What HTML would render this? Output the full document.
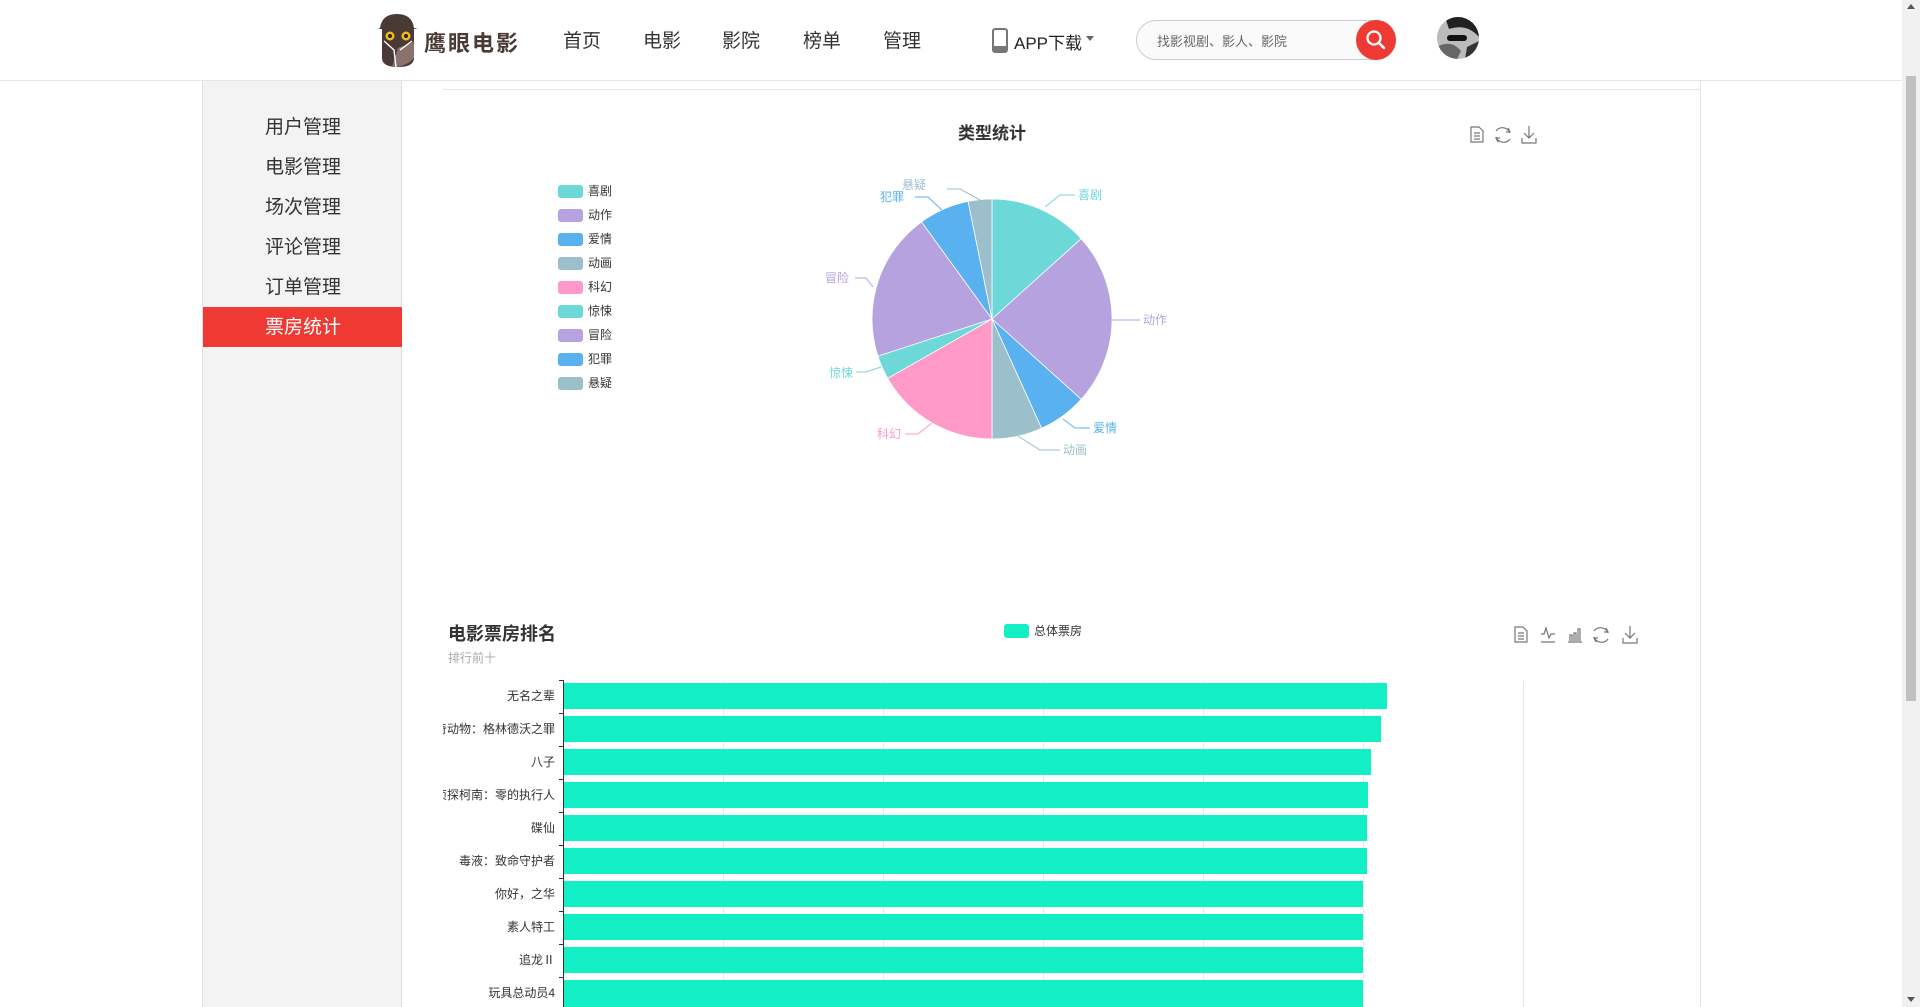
<!DOCTYPE html>
<html><head><meta charset="utf-8">
<style>
*{margin:0;padding:0;box-sizing:border-box}
html,body{width:1920px;height:1007px;overflow:hidden;background:#fff;font-family:"Liberation Sans","Noto Sans CJK SC",sans-serif;color:#333}
.hdr{position:absolute;left:0;top:0;width:1902px;height:81px;border-bottom:1px solid #e5e5e5;background:#fff}
.nav{position:absolute;top:26px;font-size:19px;color:#333}
.side{position:absolute;left:202px;top:81px;width:200px;height:926px;background:#f3f3f3;border-left:1px solid #e0e0e0;border-right:1px solid #ddd}
.side div{position:absolute;left:0;width:199px;height:40px;line-height:40px;padding-left:62px;font-size:19px;color:#333}
.side .act{background:#ee3a33;color:#fff}
.sb{position:absolute;left:1902px;top:0;width:18px;height:1007px;background:#f1f1f1}
.thumb{position:absolute;left:1906px;top:76px;width:10px;height:625px;background:#c1c1c1}
</style></head><body>
<div class="hdr">
  <svg style="position:absolute;left:376px;top:12px" width="44" height="56" viewBox="0 0 44 56">
    <path d="M4 16 Q6 2 21 2 Q36 2 38 16 L42 17 L2 17 Z" fill="#4a3a36"/>
    <path d="M6 17 H38 V46 Q38 55 22 55 Q6 55 6 46 Z" fill="#4a3a36"/>
    <path d="M22 36 L16 55 Q30 55 38 46 V30 Z" fill="#8a736c"/>
    <circle cx="14" cy="24" r="4.5" fill="#f3b918"/><circle cx="14" cy="24" r="2" fill="#222"/>
    <circle cx="30" cy="24" r="4.5" fill="#f3b918"/><circle cx="30" cy="24" r="2" fill="#222"/>
    <path d="M8 29 L18 38 L20 55 M36 29 L24 38" stroke="#fff" stroke-width="1.4" fill="none"/>
  </svg>
  <div style="position:absolute;left:424px;top:26px;font-size:22px;font-weight:bold;color:#4a3a36;letter-spacing:2px">鹰眼电影</div>
  <div class="nav" style="left:563px">首页</div>
  <div class="nav" style="left:643px">电影</div>
  <div class="nav" style="left:722px">影院</div>
  <div class="nav" style="left:803px">榜单</div>
  <div class="nav" style="left:883px">管理</div>
  <svg style="position:absolute;left:992px;top:28px" width="16" height="25" viewBox="0 0 16 25"><rect x="1" y="1" width="14" height="23" rx="2" fill="none" stroke="#777" stroke-width="2"/><rect x="2" y="18" width="12" height="5" fill="#777"/></svg>
  <div style="position:absolute;left:1014px;top:29px;font-size:17px;color:#222">APP下载</div>
  <div style="position:absolute;left:1086px;top:36px;width:0;height:0;border-left:4px solid transparent;border-right:4px solid transparent;border-top:5px solid #666"></div>
  <div style="position:absolute;left:1136px;top:20px;width:260px;height:40px;border:1px solid #ccc;border-radius:20px;background:#fafafa"></div>
  <div style="position:absolute;left:1157px;top:31px;font-size:13px;color:#666">找影视剧、影人、影院</div>
  <div style="position:absolute;left:1356px;top:20px;width:40px;height:40px;border-radius:20px;background:#ee3a33"></div>
  <svg style="position:absolute;left:1364px;top:28px" width="24" height="24" viewBox="0 0 24 24"><circle cx="10" cy="10" r="6.5" fill="none" stroke="#fff" stroke-width="2.3"/><path d="M15 15 L20 20" stroke="#fff" stroke-width="2.6" stroke-linecap="round"/></svg>
  <svg style="position:absolute;left:1437px;top:17px" width="42" height="42" viewBox="0 0 42 42"><defs><clipPath id="c"><circle cx="21" cy="21" r="21"/></clipPath></defs><g clip-path="url(#c)"><rect width="42" height="42" fill="#bbb"/><path d="M8 0 H42 V20 Q30 6 12 12 Z" fill="#222"/><path d="M0 30 Q14 22 24 34 L20 42 H0 Z" fill="#666"/><rect x="10" y="18" width="20" height="6" rx="3" fill="#111"/><path d="M30 30 L42 24 V42 H28 Z" fill="#333"/></g></svg>
</div>
<div class="side">
  <div style="top:27px">用户管理</div>
  <div style="top:67px">电影管理</div>
  <div style="top:107px">场次管理</div>
  <div style="top:147px">评论管理</div>
  <div style="top:187px">订单管理</div>
  <div class="act" style="top:226px;line-height:42px">票房统计</div>
</div>
<div style="position:absolute;left:1700px;top:81px;width:1px;height:926px;background:#e5e5e5"></div>
<div style="position:absolute;left:443px;top:89px;width:1257px;height:1px;background:#e5e5e5"></div>
<svg style="position:absolute;left:0;top:0" width="1902" height="1007" font-family="Liberation Sans, Noto Sans CJK SC, sans-serif">
  <text x="992" y="139" text-anchor="middle" font-size="17" font-weight="bold" fill="#333">类型统计</text>
  <g fill="none" stroke="#777" stroke-width="1.2">
    <path d="M1471 127 h8 l4 4 v11 h-12 z M1474 133 h6 M1474 136 h6 M1474 139 h6"/>
    <path d="M1496 131 a8 8 0 0 1 14 2 M1510 139 a8 8 0 0 1 -14 -2 M1508 128 l2 4 l-4 0 M1498 142 l-2 -4 l4 0"/>
    <path d="M1529 126 v12 M1524 133 l5 5 l5 -5 M1522 138 v5 h14 v-5"/>
  </g>
  <g font-size="12" fill="#333">
    <rect x="558" y="185" width="25" height="13" rx="3" fill="#6cd8d8"/><text x="588" y="195">喜剧</text>
    <rect x="558" y="209" width="25" height="13" rx="3" fill="#b6a2de"/><text x="588" y="219">动作</text>
    <rect x="558" y="233" width="25" height="13" rx="3" fill="#5ab1ef"/><text x="588" y="243">爱情</text>
    <rect x="558" y="257" width="25" height="13" rx="3" fill="#9cbfcc"/><text x="588" y="267">动画</text>
    <rect x="558" y="281" width="25" height="13" rx="3" fill="#ff99c8"/><text x="588" y="291">科幻</text>
    <rect x="558" y="305" width="25" height="13" rx="3" fill="#6cd8d8"/><text x="588" y="315">惊悚</text>
    <rect x="558" y="329" width="25" height="13" rx="3" fill="#b6a2de"/><text x="588" y="339">冒险</text>
    <rect x="558" y="353" width="25" height="13" rx="3" fill="#5ab1ef"/><text x="588" y="363">犯罪</text>
    <rect x="558" y="377" width="25" height="13" rx="3" fill="#9cbfcc"/><text x="588" y="387">悬疑</text>
  </g>
  <g stroke="#fff" stroke-width="0.8">
    <path d="M992 319 L992 199 A120 120 0 0 1 1081.2 238.7 Z" fill="#6cd8d8"/>
    <path d="M992 319 L1081.2 238.7 A120 120 0 0 1 1081.2 399.3 Z" fill="#b6a2de"/>
    <path d="M992 319 L1081.2 399.3 A120 120 0 0 1 1041.6 428.3 Z" fill="#5ab1ef"/>
    <path d="M992 319 L1041.6 428.3 A120 120 0 0 1 992 439 Z" fill="#9cbfcc"/>
    <path d="M992 319 L992 439 A120 120 0 0 1 887.7 378.3 Z" fill="#ff99c8"/>
    <path d="M992 319 L887.7 378.3 A120 120 0 0 1 877.9 356.1 Z" fill="#6cd8d8"/>
    <path d="M992 319 L877.9 356.1 A120 120 0 0 1 921.5 221.9 Z" fill="#b6a2de"/>
    <path d="M992 319 L921.5 221.9 A120 120 0 0 1 968.1 201.4 Z" fill="#5ab1ef"/>
    <path d="M992 319 L968.1 201.4 A120 120 0 0 1 992 199 Z" fill="#9cbfcc"/>
  </g>
  <g fill="none" stroke-width="1">
    <path d="M1045 207 L1060 195 H1075" stroke="#6cd8d8"/>
    <path d="M1112 320 H1140" stroke="#b6a2de"/>
    <path d="M1063 419 L1075 428 H1090" stroke="#5ab1ef"/>
    <path d="M1018 436 L1040 450 H1060" stroke="#9cbfcc"/>
    <path d="M932 423 L918 434 H905" stroke="#ff99c8"/>
    <path d="M881 367 L866 372 H856" stroke="#6cd8d8"/>
    <path d="M873 287 L866 278 H855" stroke="#b6a2de"/>
    <path d="M942 210 L928 197 H915" stroke="#5ab1ef"/>
    <path d="M980 200 L960 189 H947" stroke="#9cbfcc"/>
  </g>
  <g font-size="12">
    <text x="1078" y="199" fill="#6cd8d8">喜剧</text>
    <text x="1143" y="324" fill="#b6a2de">动作</text>
    <text x="1093" y="432" fill="#5ab1ef">爱情</text>
    <text x="1063" y="454" fill="#9cbfcc">动画</text>
    <text x="877" y="438" fill="#ff99c8">科幻</text>
    <text x="829" y="377" fill="#6cd8d8">惊悚</text>
    <text x="825" y="282" fill="#b6a2de">冒险</text>
    <text x="880" y="201" fill="#5ab1ef">犯罪</text>
    <text x="902" y="189" fill="#9cbfcc">悬疑</text>
  </g>
  <text x="448" y="640" font-size="18" font-weight="bold" fill="#333">电影票房排名</text>
  <text x="448" y="662" font-size="12" fill="#aaa">排行前十</text>
  <rect x="1004" y="624" width="25" height="14" rx="3" fill="#13efc4"/>
  <text x="1034" y="635" font-size="12" fill="#333">总体票房</text>
  <g fill="none" stroke="#777" stroke-width="1.2">
    <path d="M1515 627 h8 l4 4 v11 h-12 z M1518 633 h6 M1518 636 h6 M1518 639 h6"/>
    <path d="M1541 634 h3 l2 -6 l3 10 l2 -4 h4 M1541 642 h14"/>
    <path d="M1568 642 h14 M1570 641 v-6 h2 v6 M1574 641 v-8 h2 v8 M1578 641 v-12 h2 v12"/>
    <path d="M1594 631 a8 8 0 0 1 14 2 M1608 639 a8 8 0 0 1 -14 -2 M1606 628 l2 4 l-4 0 M1596 642 l-2 -4 l4 0"/>
    <path d="M1630 626 v12 M1625 633 l5 5 l5 -5 M1623 638 v5 h14 v-5"/>
  </g>
  <g stroke="#e8e8e8" stroke-width="1">
    <path d="M723.5 681 V1007 M883.5 681 V1007 M1043.5 681 V1007 M1203.5 681 V1007 M1363.5 681 V1007 M1523.5 681 V1007"/>
  </g>
  <g fill="#13efc4">
    <rect x="564" y="683" width="823" height="26"/>
    <rect x="564" y="716" width="817" height="26"/>
    <rect x="564" y="749" width="807" height="26"/>
    <rect x="564" y="782" width="804" height="26"/>
    <rect x="564" y="815" width="803" height="26"/>
    <rect x="564" y="848" width="803" height="26"/>
    <rect x="564" y="881" width="799" height="26"/>
    <rect x="564" y="914" width="799" height="26"/>
    <rect x="564" y="947" width="799" height="26"/>
    <rect x="564" y="980" width="799" height="27"/>
  </g>
  <g stroke="#333" stroke-width="1">
    <path d="M563.5 680 V1007 M559 680.5 h5 M559 713.5 h5 M559 746.5 h5 M559 779.5 h5 M559 812.5 h5 M559 845.5 h5 M559 878.5 h5 M559 911.5 h5 M559 944.5 h5 M559 977.5 h5"/>
  </g>
  <defs><clipPath id="lc"><rect x="443" y="670" width="120" height="340"/></clipPath></defs>
  <g font-size="12" fill="#333" text-anchor="end" clip-path="url(#lc)">
    <text x="555" y="700">无名之辈</text>
    <text x="555" y="733">神奇动物：格林德沃之罪</text>
    <text x="555" y="766">八子</text>
    <text x="555" y="799">名侦探柯南：零的执行人</text>
    <text x="555" y="832">碟仙</text>
    <text x="555" y="865">毒液：致命守护者</text>
    <text x="555" y="898">你好，之华</text>
    <text x="555" y="931">素人特工</text>
    <text x="555" y="964">追龙Ⅱ</text>
    <text x="555" y="997">玩具总动员4</text>
  </g>
</svg>
<div class="sb"></div><div class="thumb"></div>
<div style="position:absolute;left:1907px;top:4px;width:0;height:0;border-left:4px solid transparent;border-right:4px solid transparent;border-bottom:5px solid #555"></div>
<div style="position:absolute;left:1907px;top:997px;width:0;height:0;border-left:4px solid transparent;border-right:4px solid transparent;border-top:5px solid #555"></div>
</body></html>
